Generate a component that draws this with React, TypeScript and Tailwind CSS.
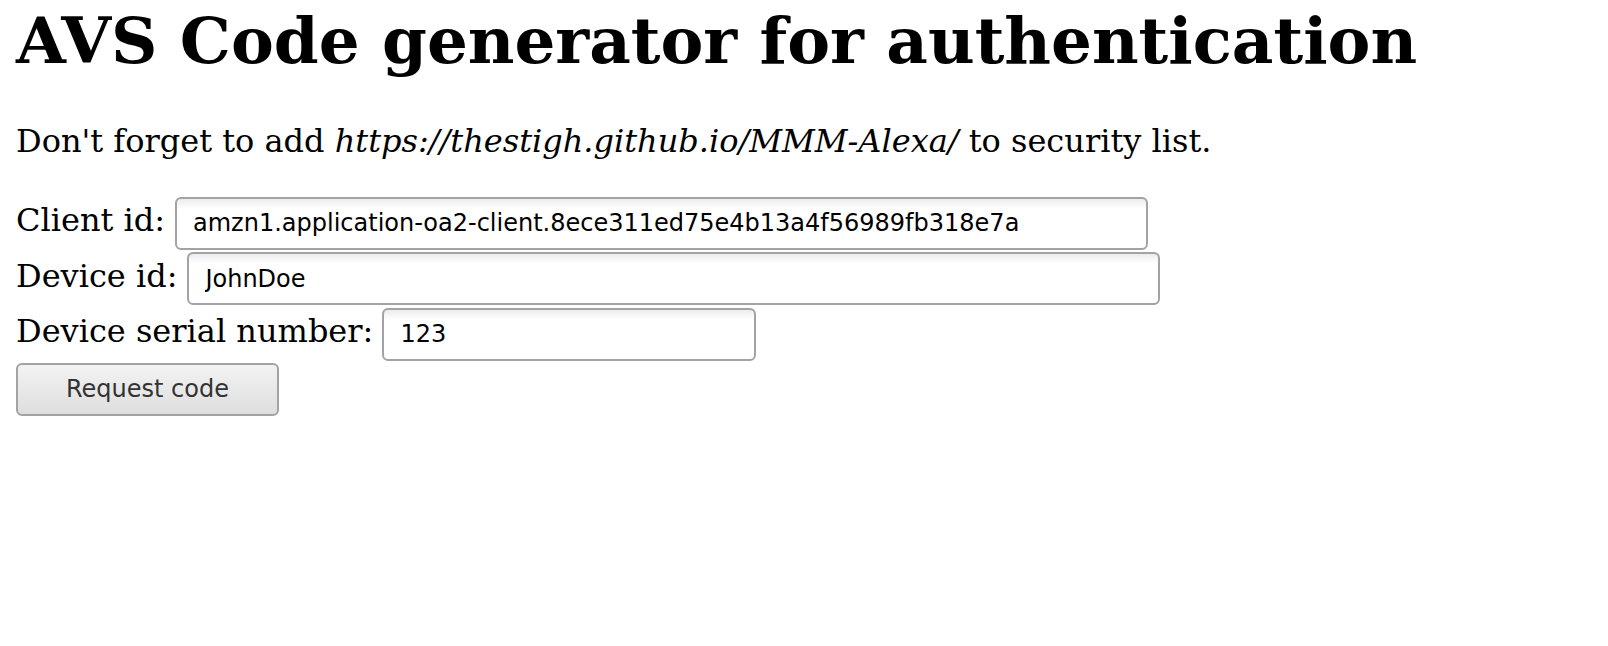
import { useState } from 'react';

export default function App() {
  const [clientId, setClientId] = useState('amzn1.application-oa2-client.8ece311ed75e4b13a4f56989fb318e7a');
  const [deviceId, setDeviceId] = useState('JohnDoe');
  const [serial, setSerial] = useState('123');

  const inputClass =
    "h-[53px] rounded-[6px] border-2 border-[#a3a3a3] bg-white bg-gradient-to-b from-[#ececec] via-white via-[20%] to-white pl-4 pr-2 text-[24px] text-black font-['DejaVu_Sans',sans-serif] outline-none";

  return (
    <div className="min-h-screen bg-white px-4 pt-[3px] text-black font-['DejaVu_Serif',serif]">
      <h1 className="text-[64.25px] leading-[76px] font-bold">AVS Code generator for authentication</h1>

      <p className="mt-[44px] text-[32px] leading-[37px]">
        Don't forget to add <em>https://thestigh.github.io/MMM-Alexa/</em> to security list.
      </p>

      <form className="mt-[36px] flex flex-col gap-[2px]" onSubmit={e => e.preventDefault()}>
        <div className="flex items-baseline gap-[10px] text-[32px]">
          <label htmlFor="client">Client id:</label>
          <input id="client" className={`${inputClass} w-[973px]`} value={clientId} onChange={e => setClientId(e.target.value)} />
        </div>
        <div className="flex items-baseline gap-[10px] text-[32px]">
          <label htmlFor="device">Device id:</label>
          <input id="device" className={`${inputClass} w-[973px]`} value={deviceId} onChange={e => setDeviceId(e.target.value)} />
        </div>
        <div className="flex items-baseline gap-[9px] text-[32px]">
          <label htmlFor="serial">Device serial number:</label>
          <input id="serial" className={`${inputClass} w-[374px]`} value={serial} onChange={e => setSerial(e.target.value)} />
        </div>
        <div>
          <button
            type="submit"
            className="h-[53px] w-[263px] rounded-[6px] border-2 border-[#a3a3a3] bg-gradient-to-b from-[#f3f3f3] to-[#dedede] text-[24px] text-[#333333] font-['DejaVu_Sans',sans-serif]"
          >
            Request code
          </button>
        </div>
      </form>
    </div>
  );
}
